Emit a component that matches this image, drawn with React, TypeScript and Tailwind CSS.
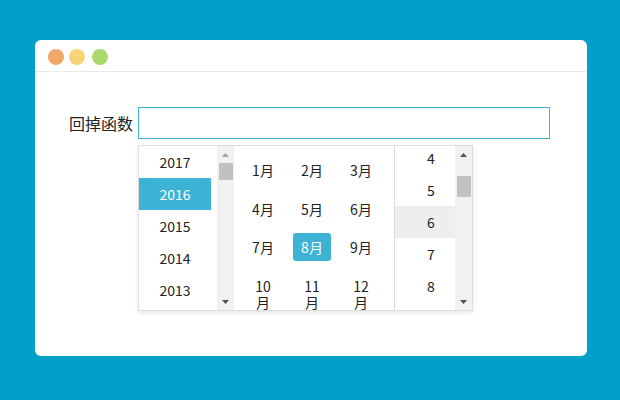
import React from "react";

const font = { fontFamily: '"Noto Sans CJK SC", "Noto Sans", sans-serif' };

function Arrow({ dir, color }: { dir: "up" | "down"; color: string }) {
  return (
    <div className="h-[17px] w-[17px] flex items-center justify-center">
      <svg width="7" height="4" viewBox="0 0 7 4">
        {dir === "up" ? (
          <polygon points="3.5,0 7,4 0,4" fill={color} />
        ) : (
          <polygon points="0,0 7,0 3.5,4" fill={color} />
        )}
      </svg>
    </div>
  );
}

function Scrollbar({ thumbTop, thumbH, upColor }: { thumbTop: number; thumbH: number; upColor: string }) {
  return (
    <div className="w-[17px] h-full bg-[#f1f1f1] flex flex-col">
      <Arrow dir="up" color={upColor} />
      <div className="flex-1 relative">
        <div
          className="absolute left-[1.5px] w-[14px] bg-[#c1c1c1]"
          style={{ top: thumbTop, height: thumbH }}
        />
      </div>
      <Arrow dir="down" color="#505050" />
    </div>
  );
}

export default function App() {
  const years = [2017, 2016, 2015, 2014, 2013];
  const months = ["1月", "2月", "3月", "4月", "5月", "6月", "7月", "8月", "9月", "10月", "11月", "12月"];
  const days = [4, 5, 6, 7, 8];
  return (
    <div className="w-[620px] h-[400px] bg-[#00a0c8] pt-[40px] pl-[35px]" style={font}>
      <div className="w-[552px] h-[316px] bg-white rounded-[6px]">
        <div className="h-[32px] border-b border-[#ebebeb] flex items-start pt-[9px] pl-[13px]">
          <div className="w-[16px] h-[16px] rounded-full bg-[#f0a868]" />
          <div className="w-[16px] h-[16px] rounded-full bg-[#f8d479] ml-[5px]" />
          <div className="w-[16px] h-[16px] rounded-full bg-[#a8d96a] ml-[7px]" />
        </div>
        <div className="pt-[35px]">
          <div className="relative flex items-center">
            <div className="w-[103px] pr-[5px] text-right text-[16px] text-[#222]">回掉函数</div>
            <div className="w-[412px] h-[32px] border border-[#3cb3d4]" />
            <div className="absolute left-[103px] top-[38px] w-[335px] h-[166px] border border-[#dddddd] bg-white flex shadow-[0_2px_4px_rgba(0,0,0,0.1)] text-[14px] text-[#222]">
              <div className="w-[78px] h-full overflow-hidden">
                {years.map((y) => (
                  <div
                    key={y}
                    className={
                      y === 2016
                        ? "w-[72px] h-[32px] leading-[32px] text-center bg-[#3cb3d4] text-white"
                        : "w-[72px] h-[32px] leading-[32px] text-center"
                    }
                  >
                    {y}
                  </div>
                ))}
              </div>
              <Scrollbar thumbTop={0} thumbH={17} upColor="#a3a3a3" />
              <div className="w-[161px] h-full overflow-hidden border-r border-[#dddddd]">
                <div className="grid grid-cols-[38px_38px_38px] gap-x-[11px] gap-y-[10.5px] pl-[10px] pt-[10px]">
                  {months.map((m) => (
                    <div
                      key={m}
                      className={
                        m === "8月"
                          ? "w-[38px] px-[6px] py-[6px] leading-[16px] text-center rounded-[3px] bg-[#3cb3d4] text-white break-all"
                          : "w-[38px] px-[6px] py-[6px] leading-[16px] text-center rounded-[3px] break-all"
                      }
                    >
                      {m}
                    </div>
                  ))}
                </div>
              </div>
              <div className="w-[60px] h-full overflow-hidden">
                <div className="mt-[-4px]">
                  {days.map((d) => (
                    <div
                      key={d}
                      className={
                        d === 6
                          ? "h-[32px] leading-[32px] pl-[12px] text-center bg-[#eeeeee]"
                          : "h-[32px] leading-[32px] pl-[12px] text-center"
                      }
                    >
                      {d}
                    </div>
                  ))}
                </div>
              </div>
              <Scrollbar thumbTop={13} thumbH={21} upColor="#505050" />
            </div>
          </div>
        </div>
      </div>
    </div>
  );
}
